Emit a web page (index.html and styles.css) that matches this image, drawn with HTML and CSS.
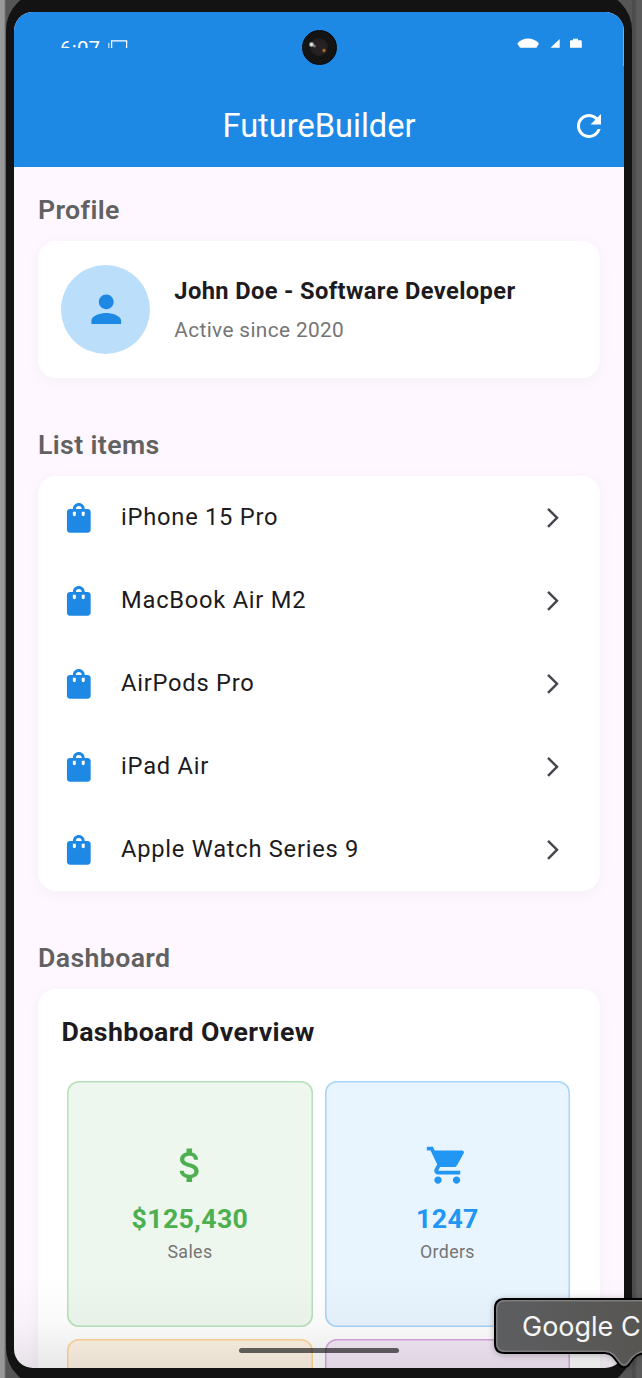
FILE: index.html
```html
<!DOCTYPE html>
<html lang="en">
<head>
<meta charset="utf-8">
<title>FutureBuilder</title>
<link rel="stylesheet" href="styles.css">
</head>
<body>
<svg class="defs" width="0" height="0">
  <symbol id="bag" viewBox="0 0 24 24"><path d="M18 6h-2c0-2.210-1.790-4-4-4S8 3.790 8 6H6c-1.100 0-2 .9-2 2v12c0 1.100.9 2 2 2h12c1.100 0 2-.9 2-2V8c0-1.100-.9-2-2-2zm-8 4c0 .55-.45 1-1 1s-1-.45-1-1V8h2v2zm2-6c1.100 0 2 .9 2 2h-4c0-1.100.9-2 2-2zm4 6c0 .55-.45 1-1 1s-1-.45-1-1V8h2v2z"/></symbol>
  <symbol id="chevron" viewBox="0 0 24 24"><path d="M6.230 20.230 8 22l10-10L8 2 6.230 3.770 14.460 12z"/></symbol>
</svg>
<div class="stage">
  <div class="device">
    <div class="screen">
      <header class="appbar">
        <div class="status">
          <span class="clock">6:07</span>
          <svg class="cast" width="20" height="16" viewBox="0 0 20 16"><path d="M.8 3v13" stroke="#fff" stroke-opacity=".8" stroke-width="1.200"/><path d="M3.600 16V.8h15v15.200" fill="none" stroke="#fff" stroke-width="1.300"/></svg>
          <svg class="signals" width="66" height="10" viewBox="0 0 66 10" fill="#fff"><path d="M.3 5.500C6-1.200 16-1.200 22 5.500L19.500 9.700H3z"/><path d="M33.500 9.700 42.700 1v8.700z"/><path d="M53 9.700V3.500q0-1.200 1.200-1.200H56V.8h5v1.500h2.600q1.200 0 1.200 1.200v6.200z"/></svg>
        </div>
        <div class="toolbar">
          <h1 class="title">FutureBuilder</h1>
          <svg class="refresh" viewBox="0 0 24 24" fill="#fff"><path d="M17.650 6.350C16.200 4.900 14.210 4 12 4c-4.420 0-7.990 3.580-7.990 8s3.570 8 7.990 8c3.730 0 6.840-2.550 7.730-6h-2.080c-.82 2.330-3.040 4-5.650 4-3.310 0-6-2.690-6-6s2.690-6 6-6c1.660 0 3.140.69 4.220 1.780L13 11h7V4l-2.350 2.350z"/></svg>
        </div>
      </header>
      <main class="content">
        <h2 class="heading">Profile</h2>
        <section class="card profile">
          <div class="avatar"><svg viewBox="0 0 24 24"><path d="M12 12c2.210 0 4-1.790 4-4s-1.790-4-4-4-4 1.790-4 4 1.790 4 4 4zm0 2c-2.670 0-8 1.340-8 4v2h16v-2c0-2.660-5.330-4-8-4z"/></svg></div>
          <div class="person">
            <div class="name">John Doe - Software Developer</div>
            <div class="since">Active since 2020</div>
          </div>
        </section>
        <h2 class="heading">List items</h2>
        <section class="card list">
          <div class="row"><svg class="bag"><use href="#bag"/></svg><span>iPhone 15 Pro</span><svg class="chev"><use href="#chevron"/></svg></div>
          <div class="row"><svg class="bag"><use href="#bag"/></svg><span>MacBook Air M2</span><svg class="chev"><use href="#chevron"/></svg></div>
          <div class="row"><svg class="bag"><use href="#bag"/></svg><span>AirPods Pro</span><svg class="chev"><use href="#chevron"/></svg></div>
          <div class="row"><svg class="bag"><use href="#bag"/></svg><span>iPad Air</span><svg class="chev"><use href="#chevron"/></svg></div>
          <div class="row"><svg class="bag"><use href="#bag"/></svg><span>Apple Watch Series 9</span><svg class="chev"><use href="#chevron"/></svg></div>
        </section>
        <h2 class="heading">Dashboard</h2>
        <section class="card dashboard">
          <h3 class="overview">Dashboard Overview</h3>
          <div class="tiles">
            <div class="tile green">
              <svg class="glyph" viewBox="0 0 24 24"><path d="M11.800 10.900c-2.270-.59-3-1.200-3-2.150 0-1.090 1.010-1.850 2.700-1.850 1.780 0 2.440.85 2.500 2.100h2.210c-.07-1.720-1.120-3.300-3.210-3.810V3h-3v2.160c-1.940.42-3.500 1.680-3.500 3.610 0 2.310 1.910 3.460 4.700 4.130 2.500.6 3 1.480 3 2.410 0 .69-.49 1.790-2.700 1.790-2.060 0-2.870-.92-2.980-2.100h-2.200c.12 2.190 1.760 3.420 3.680 3.830V21h3v-2.150c1.950-.37 3.500-1.500 3.500-3.550 0-2.840-2.430-3.810-4.700-4.400z"/></svg>
              <div class="value">$125,430</div>
              <div class="label">Sales</div>
            </div>
            <div class="tile blue">
              <svg class="glyph" viewBox="0 0 24 24"><path d="M7 18c-1.100 0-1.990.9-1.990 2S5.900 22 7 22s2-.9 2-2-.9-2-2-2zM1 2v2h2l3.600 7.590-1.350 2.450c-.16.280-.25.610-.25.960 0 1.100.9 2 2 2h12v-2H7.420c-.14 0-.25-.11-.25-.25l.03-.12.900-1.630h7.450c.75 0 1.410-.41 1.750-1.030l3.580-6.490c.08-.14.120-.31.120-.48 0-.55-.45-1-1-1H5.210l-.94-2H1zm16 16c-1.100 0-1.990.9-1.990 2s.89 2 1.990 2 2-.9 2-2-.9-2-2-2z"/></svg>
              <div class="value">1247</div>
              <div class="label">Orders</div>
            </div>
            <div class="tile orange"></div>
            <div class="tile purple"></div>
          </div>
        </section>
      </main>
      <div class="shade"></div>
      <div class="edge"></div>
      <div class="camera"></div>
      <div class="handle"></div>
    </div>
  </div>
  <div class="tooltip">
    <svg width="160" height="82" viewBox="0 0 160 82">
      <defs><linearGradient id="tip" x1="0" y1="0" x2="1" y2="0"><stop offset="0" stop-color="#5d5e61"/><stop offset="1" stop-color="#565450"/></linearGradient></defs>
      <path d="M11.500 2H170V56H153C145 56 141 60 137 66 134 71.500 128.500 71.500 125 66 121 60 118 56 112 56H11.500Q2 56 2 46.500V11.500Q2 2 11.500 2Z" fill="url(#tip)" stroke="#000" stroke-width="2"/>
      <path d="M170 3.800H12Q3.800 3.800 3.800 12V46Q3.800 54.200 12 54.200H112C119 54.200 123 60 126.500 65 129.500 69 132.500 69 135.500 65 139.500 59 144 54.200 152 54.200H170" fill="none" stroke="#7d7d7e" stroke-width="1.500"/>
    </svg>
    <span class="tiptext">Google C</span>
  </div>
</div>
</body>
</html>
```
FILE: styles.css
```css
* { box-sizing: border-box; }
body { margin: 0; font-family: Roboto, sans-serif; }
svg { display: block; flex: none; }
.defs { position: absolute; }
.stage {
  position: relative;
  width: 642px;
  height: 1378px;
  overflow: hidden;
  background: linear-gradient(90deg, #999 0, #999 4px, #555 6px, #555 632px, #474747 633px, #5d5d5d 638px, #595959 642px);
}
.device {
  height: 1394px;
  width: 626px;
  margin: -8px 0 0 6px;
  padding: 20px 8px 18px;
  background: #131313;
  border-radius: 38px;
}
.screen {
  position: relative;
  width: 610px;
  height: 1356px;
  border-radius: 19px;
  overflow: hidden;
  background: #fef7ff;
}
.appbar {
  height: 155px;
  background: #1e88e5;
  color: #fff;
}
.status {
  display: flex;
  height: 36px;
  overflow: hidden;
  padding: 0 41px 0 46px;
}
.clock {
  font-size: 20.500px;
  line-height: 24px;
  padding-top: 25px;
  letter-spacing: .2px;
  width: 48px;
}
.cast { margin-top: 28px; }
.signals { margin: 26px 0 0 auto; }
.toolbar {
  display: grid;
  grid-template-columns: 48px 1fr 48px;
  align-items: center;
  height: 83px;
  margin-top: 36px;
}
.title {
  grid-column: 2;
  margin: 0;
  text-align: center;
  font-size: 32.600px;
  font-weight: 400;
}
.refresh { width: 36px; height: 36px; margin-left: -5.500px; }
.content { padding: 24px 24px 0; }
.heading {
  margin: 0 0 12px;
  font-size: 26.700px;
  line-height: 38px;
  font-weight: 600;
  letter-spacing: .37px;
  color: #616161;
}
.card {
  background: #fff;
  border-radius: 18px;
  box-shadow: 0 3px 15px rgba(0, 0, 0, .04);
}
.card + .heading { margin-top: 48px; }
.profile {
  display: flex;
  align-items: center;
  gap: 24px;
  height: 137px;
  padding: 0 23.300px;
}
.avatar {
  display: grid;
  place-items: center;
  width: 89px;
  height: 89px;
  border-radius: 50%;
  background: #bbdefb;
}
.avatar svg { width: 44.500px; height: 44.500px; fill: #1e88e5; }
.name {
  font-size: 23.700px;
  line-height: 34px;
  font-weight: 700;
  letter-spacing: .37px;
  color: #1d1b20;
}
.since {
  margin-top: 6px;
  padding-top: 1px;
  font-size: 20.800px;
  line-height: 30px;
  letter-spacing: .37px;
  color: #757575;
}
.list { height: 415px; }
.row {
  display: flex;
  align-items: center;
  height: 83px;
  padding: 0 35.500px 0 23px;
  font-size: 23.700px;
  letter-spacing: .74px;
  color: #1d1b20;
}
.row span { padding-bottom: 2px; }
.bag { width: 35.600px; height: 35.600px; margin-right: 24.500px; fill: #1e88e5; }
.chev { width: 23.700px; height: 23.700px; margin-left: auto; fill: #49454f; }
.dashboard { height: 640px; padding: 24px 23.500px; }
.overview {
  margin: 0 0 30px;
  font-size: 26.700px;
  line-height: 38px;
  font-weight: 700;
  letter-spacing: .37px;
  color: #1d1b20;
}
.tiles {
  display: grid;
  grid-template-columns: 245.500px 245.500px;
  grid-auto-rows: 246px;
  gap: 12px;
  padding-left: 5.700px;
}
.tile {
  display: flex;
  flex-direction: column;
  align-items: center;
  padding-top: 62px;
  border-radius: 12px;
  box-shadow: inset 0 0 0 1.500px var(--line);
}
.green { background: #edf7ed; --line: #b7dfb9; color: #4caf50; }
.blue { background: #e8f4fe; --line: #a6d5fa; color: #2196f3; }
.orange { background: #fff4e5; --line: #ffd699; }
.purple { background: #f5e9f7; --line: #d7a8df; }
.glyph { width: 44.500px; height: 44.500px; fill: currentColor; }
.value {
  margin-top: 12px;
  font-size: 26.700px;
  line-height: 38px;
  font-weight: 700;
  letter-spacing: .37px;
}
.label {
  margin-top: 1px;
  font-size: 17.800px;
  line-height: 26px;
  letter-spacing: .37px;
  color: #757575;
}
.shade {
  position: absolute;
  inset: auto 0 0;
  height: 90px;
  background: linear-gradient(rgba(0, 0, 0, 0), rgba(0, 0, 0, .025) 50%, rgba(0, 0, 0, .09));
}
.edge {
  position: absolute;
  right: 0;
  top: 16px;
  width: 1px;
  height: 38px;
  background: #69b2f0;
}
.camera {
  position: absolute;
  left: 288px;
  top: 18px;
  width: 35px;
  height: 35px;
  border-radius: 50%;
  border: 1.500px solid #050505;
  background:
    radial-gradient(circle at 8.500px 13.500px, #f4fff8 0, #b9c6be 1.500px, transparent 3px),
    radial-gradient(circle at 11.500px 15px, #b793ac 0, transparent 2px),
    radial-gradient(circle at 21px 19.500px, #e8a050 0, #70401f 1.500px, transparent 2.500px),
    radial-gradient(circle at 16px 16px, #292427 0, #241f20 8px, #141414 9.500px);
}
.handle {
  position: absolute;
  left: 225px;
  top: 1335.500px;
  width: 160px;
  height: 5.500px;
  border-radius: 3px;
  background: rgba(0, 0, 0, .6);
}
.tooltip {
  position: absolute;
  left: 493px;
  top: 1297px;
}
.tooltip svg { filter: drop-shadow(0 1px 3px rgba(0, 0, 0, .25)); }
.tiptext {
  position: absolute;
  left: 29px;
  top: 13px;
  font: 400 27px/34px Inter, sans-serif;
  white-space: nowrap;
  color: #f6f6f6;
}
```
